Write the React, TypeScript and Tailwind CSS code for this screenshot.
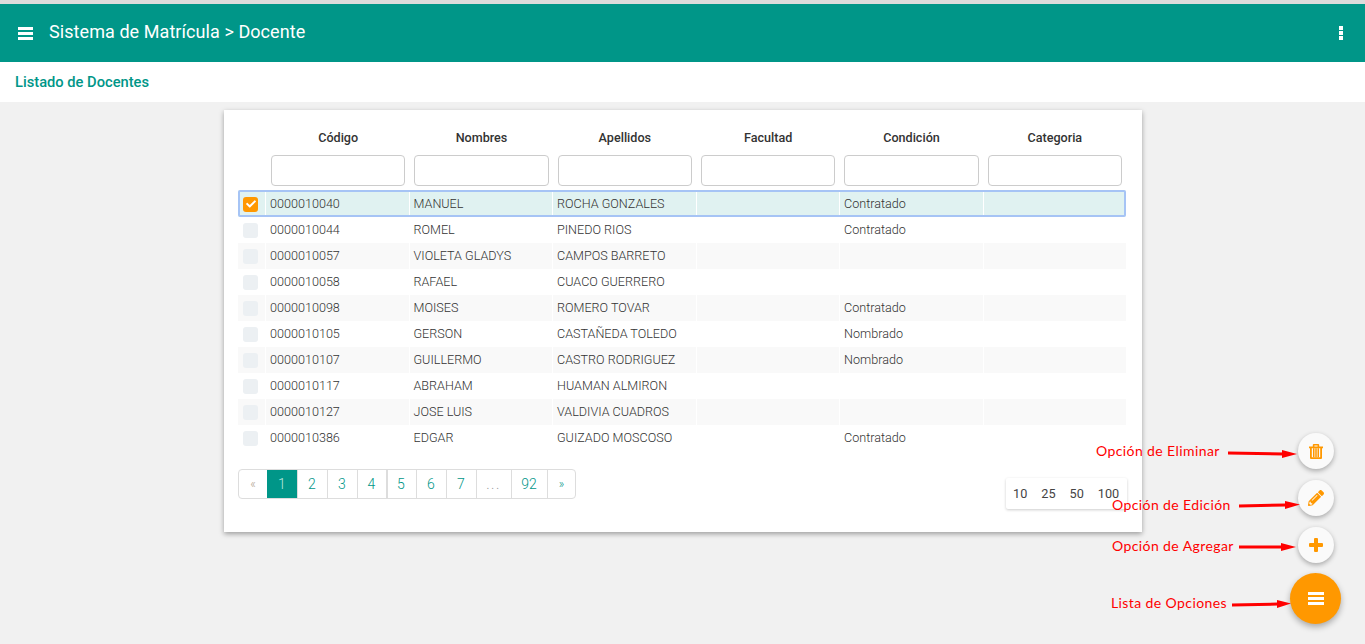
import { FaPencilAlt, FaCheck } from "react-icons/fa";

const cols = ["Código", "Nombres", "Apellidos", "Facultad", "Condición", "Categoria"];
const rows = [
  ["0000010040", "MANUEL", "ROCHA GONZALES", "", "Contratado", ""],
  ["0000010044", "ROMEL", "PINEDO RIOS", "", "Contratado", ""],
  ["0000010057", "VIOLETA GLADYS", "CAMPOS BARRETO", "", "", ""],
  ["0000010058", "RAFAEL", "CUACO GUERRERO", "", "", ""],
  ["0000010098", "MOISES", "ROMERO TOVAR", "", "Contratado", ""],
  ["0000010105", "GERSON", "CASTAÑEDA TOLEDO", "", "Nombrado", ""],
  ["0000010107", "GUILLERMO", "CASTRO RODRIGUEZ", "", "Nombrado", ""],
  ["0000010117", "ABRAHAM", "HUAMAN ALMIRON", "", "", ""],
  ["0000010127", "JOSE LUIS", "VALDIVIA CUADROS", "", "", ""],
  ["0000010386", "EDGAR", "GUIZADO MOSCOSO", "", "Contratado", ""],
];
const pages = [
  { t: "«", w: "w-[28px]", c: "text-[#b0a090] text-[12px]" },
  { t: "1", w: "w-[30px]", c: "bg-[#009688] text-[#b9e6df]" },
  { t: "2", w: "w-[30px]", c: "pr-px text-[#009688] border-l border-[#ddd]" },
  { t: "3", w: "w-[30px]", c: "pr-px text-[#009688] border-l border-[#ddd]" },
  { t: "4", w: "w-[29px]", c: "pr-px text-[#009688] border-l border-[#ddd]" },
  { t: "5", w: "w-[30px]", c: "pr-[2px] text-[#009688] border-l-2 border-[#ddd]" },
  { t: "6", w: "w-[30px]", c: "pr-px text-[#009688] border-l border-[#ddd]" },
  { t: "7", w: "w-[30px]", c: "pr-px text-[#009688] border-l border-[#ddd]" },
  { t: "...", w: "w-[35px]", c: "pr-px text-[#999] tracking-[1.5px] border-l border-[#ddd]" },
  { t: "92", w: "w-[36px]", c: "pr-px text-[#009688] border-l border-[#ddd]" },
  { t: "»", w: "w-[28px]", c: "text-[#009688] text-[12px] border-l border-[#ddd]" },
];
const notes = [
  { t: "Opción de Eliminar", cls: "left-[1096px] top-[442px]" },
  { t: "Opción de Edición", cls: "left-[1112px] top-[496px]" },
  { t: "Opción de Agregar", cls: "left-[1112px] top-[537px]" },
  { t: "Lista de Opciones", cls: "left-[1111px] top-[594px]" },
];
const arrows = [
  { s: "M1228 453 L1284 454", h: "M1297 454 L1282 450 L1282 458 Z" },
  { s: "M1239 506 L1286 505", h: "M1300 504.5 L1285 501 L1285 509 Z" },
  { s: "M1239 547 L1283 547", h: "M1296 547 L1281 543 L1281 551 Z" },
  { s: "M1232 605 L1278 604", h: "M1291 603.5 L1277 600 L1277 608 Z" },
];

function Bars({ w, h }: { w: number; h: number }) {
  return (
    <svg width={w} height={h} viewBox={`0 0 ${w} ${h}`} fill="currentColor">
      <rect x="0" y="0" width={w} height="3" />
      <rect x="0" y={(h - 3) / 2} width={w} height="3" />
      <rect x="0" y={h - 3} width={w} height="3" />
    </svg>
  );
}

const fab = "absolute left-[1298px] flex h-9 w-9 items-center justify-center rounded-full bg-[#fafafa] text-[#ff9800] shadow-[0_2px_5px_rgba(0,0,0,0.3)]";

export default function App() {
  return (
    <div className="relative h-[644px] w-[1365px] overflow-hidden bg-[#f1f1f1] font-['Roboto',sans-serif]">
      <div className="h-1 bg-[#dcdcdc]" />
      <header className="flex h-[58px] items-center justify-between bg-[#009688] pl-[18px] pr-[22px] text-white">
        <div className="flex items-center gap-[16px]">
          <Bars w={15} h={13} />
          <span className="-translate-y-px text-[18px] leading-none tracking-[0.07px]">Sistema de Matrícula &gt; Docente</span>
        </div>
        <svg width="4" height="14" viewBox="0 0 4 14" fill="currentColor">
          <rect width="4" height="4" />
          <rect y="5" width="4" height="4" />
          <rect y="10" width="4" height="4" />
        </svg>
      </header>
      <div className="flex h-10 items-center bg-white pl-[15px] text-[14.7px] font-medium text-[#009688]">Listado de Docentes</div>

      <main className="ml-[224px] mt-2 h-[422px] w-[918px] bg-white px-[14px] shadow-[0_2px_5px_rgba(0,0,0,0.35)]">
        <div className="ml-[27px] grid h-[45px] w-[860px] grid-cols-6">
          {cols.map((c) => (
            <div key={c} className="pl-[6px] pr-[3px] pt-[20px] text-center text-[12.6px] font-medium leading-[16px] text-[#333]">{c}</div>
          ))}
        </div>
        <div className="ml-[27px] grid h-[35px] w-[860px] grid-cols-6">
          {cols.map((c) => (
            <div key={c} className="pl-[6px] pr-[3px]">
              <div className="h-[31px] rounded-[4px] border border-[#ccc] bg-white" />
            </div>
          ))}
        </div>
        <div className="w-[888px]">
          {rows.map((r, i) => (
            <div
              key={r[0]}
              className={
                "flex items-center text-[12.6px] font-light text-[#333] " +
                (i === 0
                  ? "h-[27px] rounded-[2px] bg-[#e0f2f1] pt-px outline-2 -outline-offset-2 outline-[#a6c4f5]"
                  : i % 2 === 0
                    ? "h-[26px] bg-[#f9f9f9]"
                    : "h-[26px] bg-white")
              }
            >
              <div className="flex h-full w-[27px] shrink-0 items-center pl-[5px]">
                {i === 0 ? (
                  <span className="flex h-[15px] w-[15px] items-center justify-center rounded-[3px] bg-[#ff9800] text-white">
                    <FaCheck className="h-[10px] w-[10px]" />
                  </span>
                ) : (
                  <span className="h-[15px] w-[15px] rounded-[3px] bg-[#ecf0f3]" />
                )}
              </div>
              {r.map((v, j) => (
                <div key={j} className="flex h-full flex-1 items-center border-l border-white pl-[4px]">{v}</div>
              ))}
            </div>
          ))}
        </div>
        <div className="mt-[18px] flex h-[30px] w-[338px] overflow-hidden rounded-[4px] border border-[#ddd] text-[14px] font-light">
          {pages.map((p) => (
            <div key={p.t} className={"flex shrink-0 items-center justify-center " + p.w + " " + p.c}>{p.t}</div>
          ))}
        </div>
      </main>

      <div className="absolute left-[1006px] top-[478px] flex h-[31px] w-[121px] items-center gap-[14px] rounded-[2px] bg-white pl-[7px] text-[12.7px] text-[#444] shadow-[0_1px_3px_rgba(0,0,0,0.2)]">
        <span>10</span><span>25</span><span>50</span><span>100</span>
      </div>

      <button className={fab + " top-[433px]"}>
        <svg width="14" height="15" viewBox="0 0 14 15" fill="currentColor">
          <path
            fillRule="evenodd"
            d="M0 2.4h3.8V1a1 1 0 0 1 1-1h4.4a1 1 0 0 1 1 1v1.4H14v1.8h-1V14a1 1 0 0 1-1 1H2a1 1 0 0 1-1-1V4.2H0zM5.4 1.4v1h3.2v-1zM2.8 4.2v9h8.4v-9z"
          />
          <rect x="4" y="4.2" width="1.5" height="9" />
          <rect x="6.25" y="4.2" width="1.5" height="9" />
          <rect x="8.5" y="4.2" width="1.5" height="9" />
        </svg>
      </button>
      <button className={fab + " top-[480px]"}>
        <FaPencilAlt className="h-[16px] w-[16px]" />
      </button>
      <button className={fab + " top-[527px]"}>
        <svg width="14" height="14" viewBox="0 0 14 14" fill="currentColor">
          <rect x="5" y="0" width="4" height="14" rx="1" />
          <rect x="0" y="5" width="14" height="4" rx="1" />
        </svg>
      </button>
      <button className="absolute left-[1290px] top-[573px] flex h-[51px] w-[51px] items-center justify-center rounded-full bg-[#ff9800] text-white shadow-[0_3px_6px_rgba(0,0,0,0.3)]">
        <Bars w={16} h={13} />
      </button>

      {notes.map((n) => (
        <span key={n.t} className={"absolute font-['Lato',sans-serif] text-[14px] leading-[18px] tracking-[0.4px] text-[#f00] " + n.cls}>{n.t}</span>
      ))}
      <svg className="pointer-events-none absolute left-0 top-0" width="1365" height="644" viewBox="0 0 1365 644">
        {arrows.map((a) => (
          <g key={a.s}>
            <path d={a.s} fill="none" stroke="#f00" strokeWidth="3" />
            <path d={a.h} fill="#f00" />
          </g>
        ))}
      </svg>
    </div>
  );
}
